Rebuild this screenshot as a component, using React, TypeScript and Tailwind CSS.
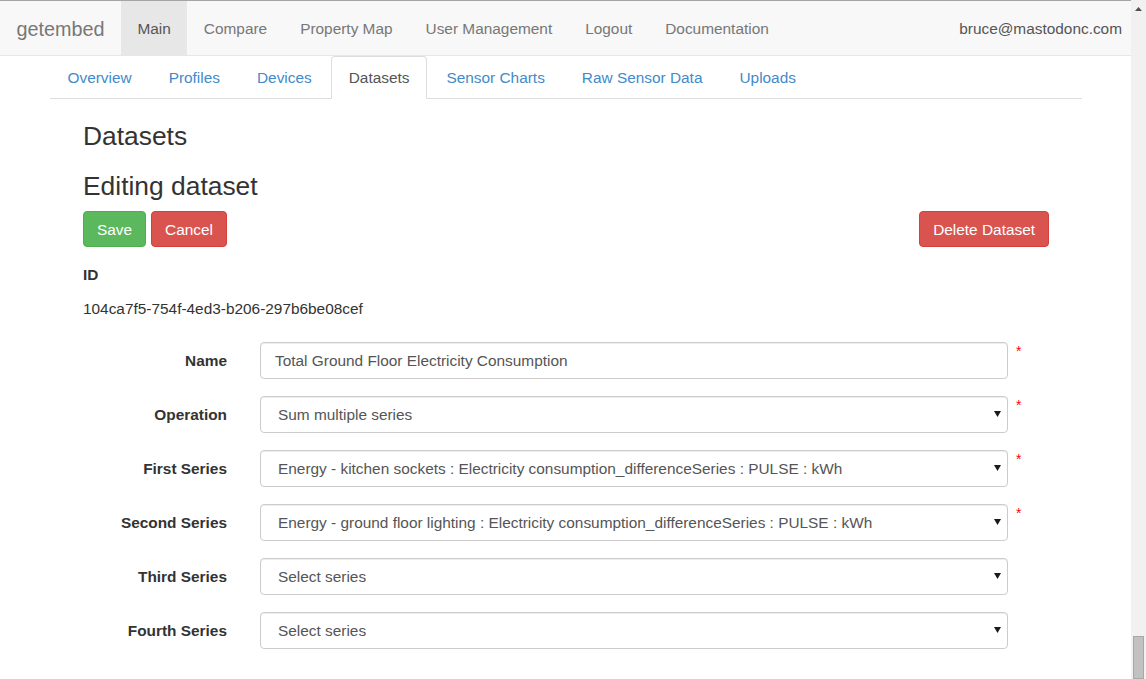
import React from "react";

type Field = {
  label: string;
  value: string;
  kind: "input" | "select";
  required?: boolean;
};

const navItems = ["Main", "Compare", "Property Map", "User Management", "Logout", "Documentation"];
const tabs = ["Overview", "Profiles", "Devices", "Datasets", "Sensor Charts", "Raw Sensor Data", "Uploads"];

const fields: Field[] = [
  { label: "Name", value: "Total Ground Floor Electricity Consumption", kind: "input", required: true },
  { label: "Operation", value: "Sum multiple series", kind: "select", required: true },
  {
    label: "First Series",
    value: "Energy - kitchen sockets : Electricity consumption_differenceSeries : PULSE : kWh",
    kind: "select",
    required: true,
  },
  {
    label: "Second Series",
    value: "Energy - ground floor lighting : Electricity consumption_differenceSeries : PULSE : kWh",
    kind: "select",
    required: true,
  },
  { label: "Third Series", value: "Select series", kind: "select" },
  { label: "Fourth Series", value: "Select series", kind: "select" },
];

const FormRow: React.FC<{ field: Field }> = ({ field }) => {
  return (
    <div className="flex items-start mb-[17px]">
      <label className="w-[144px] h-[37px] pt-[2px] flex items-center justify-end font-bold text-[#333]">
        {field.label}
      </label>
      <div
        className={`ml-[33px] w-[748px] h-[37px] flex items-center border border-[#ccc] rounded-[4px] bg-white text-[#555] shadow-[inset_0_1px_1px_rgba(0,0,0,0.075)] ${
          field.kind === "select" ? "pl-[17px] pr-[6px]" : "pl-[14px] pr-[14px]"
        }`}
      >
        <span className="flex-1 truncate pt-[2px]">{field.value}</span>
        {field.kind === "select" && (
          <svg width="7" height="6" viewBox="0 0 7 6">
            <polygon points="0,0 7,0 3.5,6" fill="#1a1a1a" />
          </svg>
        )}
      </div>
      {field.required && (
        <span className="ml-[8px] mt-[2px] text-[14px] leading-none text-[#ff0000]">*</span>
      )}
    </div>
  );
};

const App: React.FC = () => {
  return (
    <div className="flex h-[679px] overflow-hidden bg-white font-['Liberation_Sans',Arial,sans-serif] text-[15.4px] leading-[22px] text-[#333]">
      <div className="flex-1 flex flex-col border-t border-[#a5a5a5]">
        {/* top navbar */}
        <div className="h-[55px] flex items-center bg-[#f8f8f8] border-b border-[#e7e7e7]">
          <div className="h-full flex items-center px-[16.5px] pt-[2px] text-[19.8px] text-[#777]">getembed</div>
          {navItems.map((item) => (
            <div
              key={item}
              className={`h-full flex items-center px-[16.5px] pt-[2px] ${
                item === "Main" ? "bg-[#e7e7e7] text-[#555]" : "text-[#777]"
              }`}
            >
              {item}
            </div>
          ))}
          <div className="ml-auto pr-[9px] pt-[2px] text-[#555]">bruce@mastodonc.com</div>
        </div>

        {/* tabs */}
        <div className="pl-[50px] pr-[49px]">
          <div className="flex border-b border-[#ddd]">
            {tabs.map((tab) => (
              <div
                key={tab}
                className={`mr-[2px] -mb-px px-[16.5px] h-[43px] flex items-center border rounded-t-[4px] ${
                  tab === "Datasets"
                    ? "border-[#ddd] border-b-white bg-white text-[#555]"
                    : "border-transparent text-[#428bca]"
                }`}
              >
                {tab}
              </div>
            ))}
          </div>

          {/* content */}
          <div className="px-[33px]">
            <h3 className="mt-[23px] text-[26.4px] leading-[29px]">Datasets</h3>
            <h3 className="mt-[21px] text-[26.4px] leading-[29px]">Editing dataset</h3>
            <div className="mt-[9.5px] flex items-center">
              <button className="px-[13px] pt-[7px] pb-[5px] border border-[#4cae4c] bg-[#5cb85c] text-white rounded-[4px] leading-[22px]">
                Save
              </button>
              <button className="ml-[5px] px-[13px] pt-[7px] pb-[5px] border border-[#d43f3a] bg-[#d9534f] text-white rounded-[4px] leading-[22px]">
                Cancel
              </button>
              <button className="ml-auto px-[13px] pt-[7px] pb-[5px] border border-[#d43f3a] bg-[#d9534f] text-white rounded-[4px] leading-[22px]">
                Delete Dataset
              </button>
            </div>
            <div className="mt-[17px] font-bold">ID</div>
            <div className="mt-[12px]">104ca7f5-754f-4ed3-b206-297b6be08cef</div>
            <div className="mt-[22px]">
              {fields.map((f) => (
                <FormRow key={f.label} field={f} />
              ))}
            </div>
          </div>
        </div>
      </div>

      {/* scrollbar */}
      <div className="w-[15px] flex flex-col bg-[#f1f1f1]">
        <div className="h-[15px] flex items-start justify-center pt-[7px]">
          <svg width="7" height="4" viewBox="0 0 7 4">
            <polygon points="3.5,0 7,4 0,4" fill="#505050" />
          </svg>
        </div>
        <div className="flex-1" />
        <div className="mx-[2px] h-[43px] bg-[#c1c1c1] border border-[#a8a8a8]" />
      </div>
    </div>
  );
};

export default App;
